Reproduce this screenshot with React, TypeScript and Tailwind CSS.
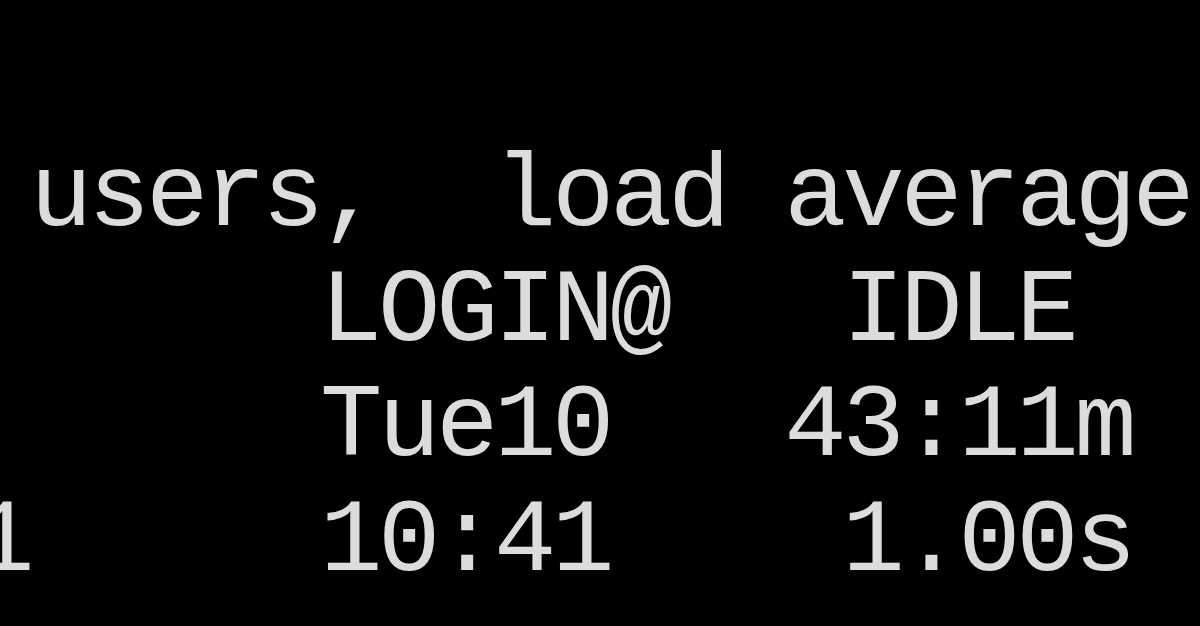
const lines = [
  " users,  load average:",
  "      LOGIN@   IDLE",
  "      Tue10   43:11m",
  "1     10:41    1.00s",
];

export default function App() {
  return (
    <div className="h-[626px] w-full overflow-hidden bg-black">
      {/* zoomed-in terminal output of `w` */}
      <div
        className="-ml-[28px] pt-[140px] font-['Liberation_Mono',monospace] text-[104px] leading-[115px] tracking-[-4.4px] text-[#dcdcdc] whitespace-pre blur-[0.7px]"
      >
        {lines.map((line, i) => (
          <div key={i}>{line}</div>
        ))}
      </div>
    </div>
  );
}
